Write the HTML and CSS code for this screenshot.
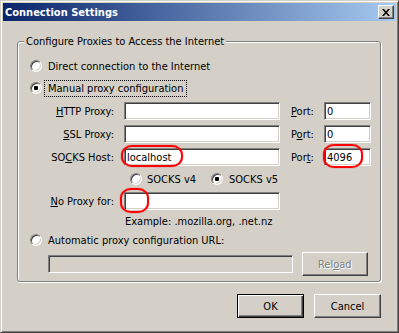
FILE: index.html
```html
<!DOCTYPE html>
<html lang="en">
<head>
    <meta charset="UTF-8">
    <title>Connection Settings</title>
    <link rel="stylesheet" href="styles.css">
</head>
<body>
    <div class="window">
        <div class="titlebar">
            <span class="title">Connection Settings</span>
            <button class="close" aria-label="Close">
                <svg width="8" height="7" viewBox="0 0 8 7">
                    <path d="M0 0h2l2 2.5L6 0h2L5 3.5 8 7H6L4 4.5 2 7H0l3-3.5z" fill="#000"/>
                </svg>
            </button>
        </div>

        <div class="content">
            <fieldset class="group">
                <legend>Configure Proxies to Access the Internet</legend>

                <label class="radio-row">
                    <input type="radio" name="mode" class="radio">
                    <span>Direct connection to the Internet</span>
                </label>
                <label class="radio-row manual">
                    <input type="radio" name="mode" class="radio" checked>
                    <span class="focus">Manual proxy configuration</span>
                </label>

                <div class="proxy-grid">
                    <label class="field-label"><u>H</u>TTP Proxy:</label>
                    <span class="field"><input type="text" class="text-input"></span>
                    <label class="port-label"><u>P</u>ort:</label>
                    <span class="field"><input type="text" class="text-input" value="0"></span>

                    <label class="field-label"><u>S</u>SL Proxy:</label>
                    <span class="field"><input type="text" class="text-input"></span>
                    <label class="port-label">P<u>o</u>rt:</label>
                    <span class="field"><input type="text" class="text-input" value="0"></span>

                    <label class="field-label">SO<u>C</u>KS Host:</label>
                    <span class="field mark-host"><input type="text" class="text-input" value="localhost"></span>
                    <label class="port-label">Por<u>t</u>:</label>
                    <span class="field mark-port"><input type="text" class="text-input" value="4096"></span>

                    <div class="socks-versions">
                        <label class="radio-row v4">
                            <input type="radio" name="socks" class="radio">
                            <span>SOCKS v4</span>
                        </label>
                        <label class="radio-row">
                            <input type="radio" name="socks" class="radio" checked>
                            <span>SOCKS v5</span>
                        </label>
                    </div>

                    <label class="field-label"><u>N</u>o Proxy for:</label>
                    <span class="field wide mark-noproxy"><input type="text" class="text-input"></span>

                    <div class="example">Example: .mozilla.org, .net.nz</div>
                </div>

                <label class="radio-row auto">
                    <input type="radio" name="mode" class="radio">
                    <span>Automatic proxy configuration URL:</span>
                </label>
                <div class="url-row">
                    <input type="text" class="text-input url-input" disabled>
                    <button class="btn" disabled>Rel<u>o</u>ad</button>
                </div>
            </fieldset>

            <div class="actions">
                <button class="btn default">OK</button>
                <button class="btn">Cancel</button>
            </div>
        </div>
    </div>
</body>
</html>
```

FILE: styles.css
```css
html, body {
    margin: 0;
    padding: 0;
    background-color: #d4d0c8;
    font-family: "DejaVu Sans Condensed", "DejaVu Sans", sans-serif;
    font-size: 11px;
    color: #000;
}
.window {
    width: 399px;
    height: 333px;
    box-sizing: border-box;
    border: 1px solid;
    border-color: #d4d0c8 #404040 #404040 #d4d0c8;
    box-shadow: inset 1px 1px #fff, inset -1px -1px #808080;
    padding: 2px;
    background-color: #d4d0c8;
    display: flex;
    flex-direction: column;
}
/* Title bar */
.titlebar {
    height: 18px;
    display: flex;
    align-items: center;
    justify-content: space-between;
    padding: 0 2px 0 2px;
    background: linear-gradient(to right, #0a246a, #a6caf0);
}
.title {
    color: #fff;
    font-weight: bold;
    font-size: 11px;
    line-height: 13px;
}
.close {
    width: 16px;
    height: 14px;
    padding: 0;
    margin: 0;
    box-sizing: border-box;
    border: 1px solid;
    border-color: #fff #404040 #404040 #fff;
    box-shadow: inset -1px -1px #808080;
    background-color: #d4d0c8;
    display: flex;
    align-items: center;
    justify-content: center;
}
.close svg {
    display: block;
    margin: 0 0 0 -1px;
}
.content {
    flex: 1;
    padding: 0 15px 0 14px;
}
/* Group box */
.group {
    margin: 14px 0 0;
    padding: 9px 12px 5px;
    border: 1px solid #808080;
    border-radius: 3px;
    box-shadow: inset 1px 1px #fff, 1px 1px #fff;
    min-width: 0;
}
.group legend {
    margin-left: -6px;
    padding: 0 2px;
    line-height: 13px;
    background-color: #d4d0c8;
}
.radio-row {
    display: flex;
    align-items: center;
    gap: 6px;
    height: 18px;
    line-height: 13px;
}
.radio-row.manual {
    margin-top: 4px;
    gap: 2px;
}
.focus {
    border: 1px dotted #000;
    padding: 1px 3px;
}
.radio {
    appearance: none;
    -webkit-appearance: none;
    width: 12px;
    height: 12px;
    margin: 0;
    box-sizing: border-box;
    border-radius: 50%;
    border: 1px solid;
    border-color: #808080 #fff #fff #808080;
    box-shadow: inset 1px 1px #404040, inset -1px -1px #d4d0c8;
    background-color: #fff;
    flex-shrink: 0;
}
.radio:checked {
    background: radial-gradient(circle, #000 0 2px, #fff 2.5px);
}
/* Proxy fields */
.proxy-grid {
    display: grid;
    grid-template-columns: 94px 156px 44px 47px;
    grid-template-rows: 18px 18px 18px 16px 18px 13px;
    row-gap: 5px;
    margin-top: 5px;
    align-items: center;
}
.field-label {
    text-align: right;
    padding-right: 10px;
    line-height: 13px;
}
.port-label {
    padding-left: 11px;
    line-height: 13px;
}
.field {
    position: relative;
    display: block;
    height: 18px;
}
.text-input {
    display: block;
    width: 100%;
    height: 18px;
    margin: 0;
    box-sizing: border-box;
    border: 1px solid;
    border-color: #808080 #fff #fff #808080;
    box-shadow: inset 1px 1px #404040, inset -1px -1px #d4d0c8;
    padding: 0 2px;
    background-color: #fff;
    font-family: inherit;
    font-size: 11px;
    color: #000;
    outline: none;
}
.text-input:disabled {
    background-color: #d4d0c8;
}
.socks-versions {
    grid-column: 2 / 5;
    display: flex;
    padding-left: 6px;
}
.radio-row.v4 {
    width: 81px;
    gap: 5px;
}
.example {
    grid-column: 2 / 4;
    padding-left: 1px;
    line-height: 13px;
}
/* Red markers drawn over the screenshot */
.mark-host::after,
.mark-port::after,
.mark-noproxy::after {
    content: "";
    position: absolute;
    box-sizing: border-box;
    border: 2px solid #f00;
    box-shadow: 0 0 1px #f00;
    border-radius: 11px / 10px;
}
.mark-host::after {
    left: -3px;
    top: -3px;
    width: 62px;
    height: 22px;
}
.mark-port::after {
    left: -1px;
    top: -4px;
    width: 40px;
    height: 24px;
}
.mark-noproxy::after {
    left: -4px;
    top: -4px;
    width: 29px;
    height: 25px;
}
.radio-row.auto {
    margin-top: 3px;
}
.url-row {
    display: flex;
    align-items: center;
    gap: 9px;
    margin-top: 3px;
    padding-left: 18px;
}
.url-input {
    width: 247px;
}
/* Buttons */
.btn {
    width: 67px;
    height: 24px;
    margin: 0;
    padding: 0;
    box-sizing: border-box;
    border: 1px solid;
    border-color: #fff #404040 #404040 #fff;
    box-shadow: inset -1px -1px #808080, inset 1px 1px #d4d0c8;
    background-color: #d4d0c8;
    font-family: inherit;
    font-size: 11px;
    color: #000;
}
.btn:disabled {
    color: #808080;
    text-shadow: 1px 1px #fff;
}
.btn.default {
    border-color: #000;
    box-shadow: inset 1px 1px #fff, inset -1px -1px #404040, inset -2px -2px #808080;
}
.actions {
    display: flex;
    justify-content: flex-end;
    gap: 10px;
    margin-top: 12px;
}
```
